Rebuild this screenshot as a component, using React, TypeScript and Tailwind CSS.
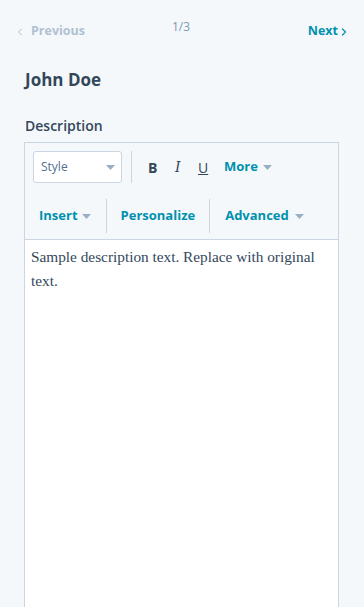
import { ChevronLeft, ChevronRight } from "lucide-react";

// small grey caret used by the toolbar dropdowns
const Caret = ({ className = "" }: { className?: string }) => (
  <svg width="9" height="5" viewBox="0 0 9 5" className={className}>
    <path d="M0 0h9L4.5 5z" fill="#99afc4" />
  </svg>
);

const Sep = () => <div className="w-px self-stretch bg-[#cbd6e2]" />;

export default function App() {
  return (
    <div
      className="flex h-[607px] w-full flex-col overflow-hidden bg-[#f5f8fa] text-[#33475b]"
      style={{ fontFamily: "'Open Sans', Lato, sans-serif" }}
    >
      {/* pager */}
      <div className="relative flex h-[46px] items-end justify-between pb-[5px] pl-[14px] pr-[14px]">
        <button className="flex items-center gap-[4px] text-[12.5px] font-bold text-[#b0c1d4]">
          <ChevronLeft size={12} strokeWidth={2} />
          <span className="ml-[1px]">Previous</span>
        </button>
        <span className="absolute left-[172px] top-[18px] text-[12px] text-[#7c98b6]">1/3</span>
        <button className="flex items-center text-[12.5px] font-bold text-[#0091ae]">
          Next
          <ChevronRight size={12} strokeWidth={2.5} />
        </button>
      </div>

      <h1 className="mt-[23px] pl-[25px] text-[17px] font-bold leading-[22px]">John Doe</h1>

      <label className="mt-[26px] pl-[25px] text-[14px] font-semibold leading-[18px]">Description</label>

      {/* editor */}
      <div className="ml-[24px] mt-[7px] flex w-[315px] flex-1 flex-col border border-b-0 border-[#cbd6e2] bg-white">
        <div className="flex flex-col border-b border-[#cbd6e2] bg-[#f5f8fa]">
          <div className="mt-[8px] flex h-[32px] items-stretch pl-[8px]">
            <div className="flex w-[89px] items-center justify-between rounded-[3px] border border-[#cbd6e2] bg-white pl-[7px] pr-[6px] text-[12px] text-[#516f90]">
              Style
              <Caret />
            </div>
            <div className="ml-[9px] flex">
              <Sep />
            </div>
            <div className="flex items-center text-[14px] text-[#33475b]">
              <span className="ml-[16px] w-[9px] font-bold">B</span>
              <span className="ml-[18px] w-[7px] italic" style={{ fontFamily: "'DejaVu Serif', serif" }}>
                I
              </span>
              <span className="ml-[16px] w-[10px] underline">U</span>
            </div>
            <div className="ml-[16px] flex items-center gap-[5px] text-[13px] font-bold text-[#0091ae]">
              More
              <Caret />
            </div>
          </div>
          <div className="mb-[6px] mt-[16px] flex h-[34px] items-stretch">
            <div className="flex items-center gap-[4px] pl-[14px] pr-[15px] text-[13px] font-bold text-[#0091ae]">
              Insert
              <Caret />
            </div>
            <Sep />
            <div className="flex items-center px-[14px] text-[13px] font-bold text-[#0091ae]">Personalize</div>
            <Sep />
            <div className="flex items-center gap-[6px] pl-[15px] text-[13px] font-bold text-[#0091ae]">
              Advanced
              <Caret />
            </div>
          </div>
        </div>
        <div
          className="px-[6px] pt-[5px] text-[15.3px] leading-[24px] text-[#33475b]"
          style={{ fontFamily: "Georgia, 'Liberation Serif', serif" }}
        >
          Sample description text. Replace with original text.
        </div>
      </div>
    </div>
  );
}
